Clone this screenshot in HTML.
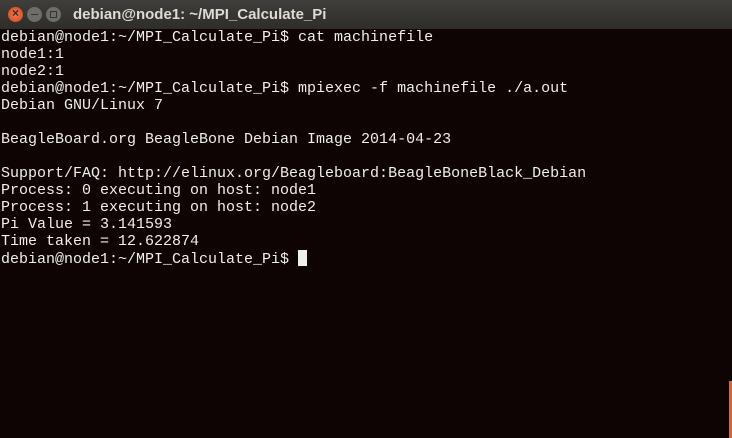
<html><head><style>
body{margin:0;width:732px;height:438px;background:#0f0404;overflow:hidden;position:relative}
.t{position:absolute;top:0;left:0;width:732px;height:29px;background:linear-gradient(#3f3e3a,#2e2d2a);}
.tt{position:absolute;left:73px;top:6px;color:#dfdbd2;font:bold 15px "Liberation Sans",sans-serif}
.b{position:absolute;top:7px;width:15px;height:15px;border-radius:50%}
pre{position:absolute;left:1px;top:29px;margin:0;font:15px/17px "Liberation Mono",monospace;color:#eeeeec}
.c{display:inline-block;width:9px;height:16px;background:#eeeeec;vertical-align:-3px}
.s{position:absolute;left:729px;top:381px;width:3px;height:57px;background:#d4683a}
</style></head><body>
<div class="t">
<div class="b" style="left:8px;background:radial-gradient(#f07a52,#d4461c)"><span style="position:absolute;left:4px;top:-1px;font:bold 12px 'Liberation Sans';color:#3a2a20">×</span></div>
<div class="b" style="left:27px;background:#6f6d68"><span style="position:absolute;left:4px;top:7px;width:7px;height:1px;background:#333"></span></div>
<div class="b" style="left:46px;background:#6f6d68"><span style="position:absolute;left:4px;top:4px;width:5px;height:5px;border:1px solid #333"></span></div>
<div class="tt">debian@node1: ~/MPI_Calculate_Pi</div>
</div>
<pre>debian@node1:~/MPI_Calculate_Pi$ cat machinefile
node1:1
node2:1
debian@node1:~/MPI_Calculate_Pi$ mpiexec -f machinefile ./a.out
Debian GNU/Linux 7

BeagleBoard.org BeagleBone Debian Image 2014-04-23

Support/FAQ: http://elinux.org/Beagleboard:BeagleBoneBlack_Debian
Process: 0 executing on host: node1
Process: 1 executing on host: node2
Pi Value = 3.141593
Time taken = 12.622874
debian@node1:~/MPI_Calculate_Pi$ <span class="c"></span></pre>
<div class="s"></div>
</body></html>
